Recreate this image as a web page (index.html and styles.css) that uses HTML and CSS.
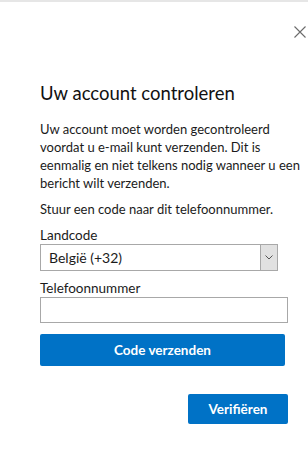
FILE: index.html
```html
<!DOCTYPE html>
<html lang="nl">
<head>
  <meta charset="UTF-8" />
  <title>Uw account controleren</title>
  <link rel="stylesheet" href="styles.css">
</head>
<body>
  <div class="top-band"></div>

  <div class="dialog-bar">
    <button class="close-btn" aria-label="Sluiten">
      <svg width="12" height="12" viewBox="0 0 12 12">
        <path d="M0.5 0.5 L11.5 11.5 M11.5 0.5 L0.5 11.5" stroke="#6b6b6b" stroke-width="1.1" fill="none" />
      </svg>
    </button>
  </div>

  <main class="verify-box">
    <h1 class="verify-title">Uw account controleren</h1>

    <p class="verify-text intro-text">Uw account moet worden gecontroleerd<br>voordat u e-mail kunt verzenden. Dit is<br>eenmalig en niet telkens nodig wanneer u een<br>bericht wilt verzenden.</p>
    <p class="verify-text">Stuur een code naar dit telefoonnummer.</p>

    <form class="verify-form">
      <label class="field-label" for="countryCode">Landcode</label>
      <div class="select-wrap">
        <select id="countryCode" class="country-select">
          <option>België (+32)</option>
        </select>
        <span class="select-arrow">
          <svg width="8" height="5" viewBox="0 0 8 5">
            <path d="M0.5 0.5 L4 4 L7.5 0.5" stroke="#555" stroke-width="1" fill="none" />
          </svg>
        </span>
      </div>

      <label class="field-label" for="phone">Telefoonnummer</label>
      <input type="tel" id="phone" class="phone-input" />

      <button type="button" class="blue-btn send-btn">Code verzenden</button>
    </form>

    <div class="verify-footer">
      <button type="button" class="blue-btn verify-btn">Verifiëren</button>
    </div>
  </main>
</body>
</html>
```

FILE: styles.css
```css
body {
  margin: 0;
  background-color: white;
  color: #1b1b1b;
  font-family: 'Segoe UI', Lato, sans-serif;
}

.top-band {
  height: 2px;
  background-color: #e6e6e6;
}

.dialog-bar {
  display: flex;
  justify-content: flex-end;
  padding: 24px 2px 0 0;
}

.close-btn {
  border: none;
  background: none;
  padding: 0;
  width: 12px;
  height: 12px;
  cursor: pointer;
}

.close-btn svg {
  display: block;
}

.verify-box {
  padding: 0 20px 0 40px;
}

.verify-title {
  margin: 42px 0 0;
  font-size: 18.5px;
  font-weight: normal;
  line-height: 26px;
  color: #111;
}

.verify-text {
  margin: 14px 0 0;
  font-size: 13px;
  line-height: 18px;
}

.intro-text {
  white-space: nowrap;
}

.verify-text + .verify-text {
  margin-top: 8px;
}

.verify-form {
  display: flex;
  flex-direction: column;
  margin-top: 8px;
}

.field-label {
  font-size: 13.5px;
  line-height: 18px;
}

.select-wrap {
  display: flex;
  width: 238px;
  height: 27px;
  box-sizing: border-box;
  border: 1px solid #a8a8a8;
  margin-bottom: 8px;
}

.country-select {
  flex: 1;
  appearance: none;
  -webkit-appearance: none;
  border: none;
  outline: none;
  background: white;
  font-family: inherit;
  font-size: 14px;
  color: #1b1b1b;
  padding: 0 0 0 8px;
}

.select-arrow {
  display: flex;
  align-items: center;
  justify-content: center;
  width: 16px;
  background-color: #e1e1e1;
  border: 1px solid #a8a8a8;
  border-width: 1px 0 1px 1px;
  margin: -1px 0;
}

.phone-input {
  width: 248px;
  height: 26px;
  box-sizing: border-box;
  border: 1px solid #a8a8a8;
  padding: 0 8px;
  font-family: inherit;
  font-size: 13px;
}

.blue-btn {
  border: none;
  border-radius: 2px;
  background-color: #0072c6;
  color: white;
  font-family: inherit;
  font-size: 13.5px;
  font-weight: bold;
  cursor: pointer;
}

.send-btn {
  width: 245px;
  height: 32px;
  margin-top: 11px;
}

.verify-footer {
  display: flex;
  justify-content: flex-end;
  margin-top: 28px;
}

.verify-btn {
  width: 100px;
  height: 30px;
}
```
